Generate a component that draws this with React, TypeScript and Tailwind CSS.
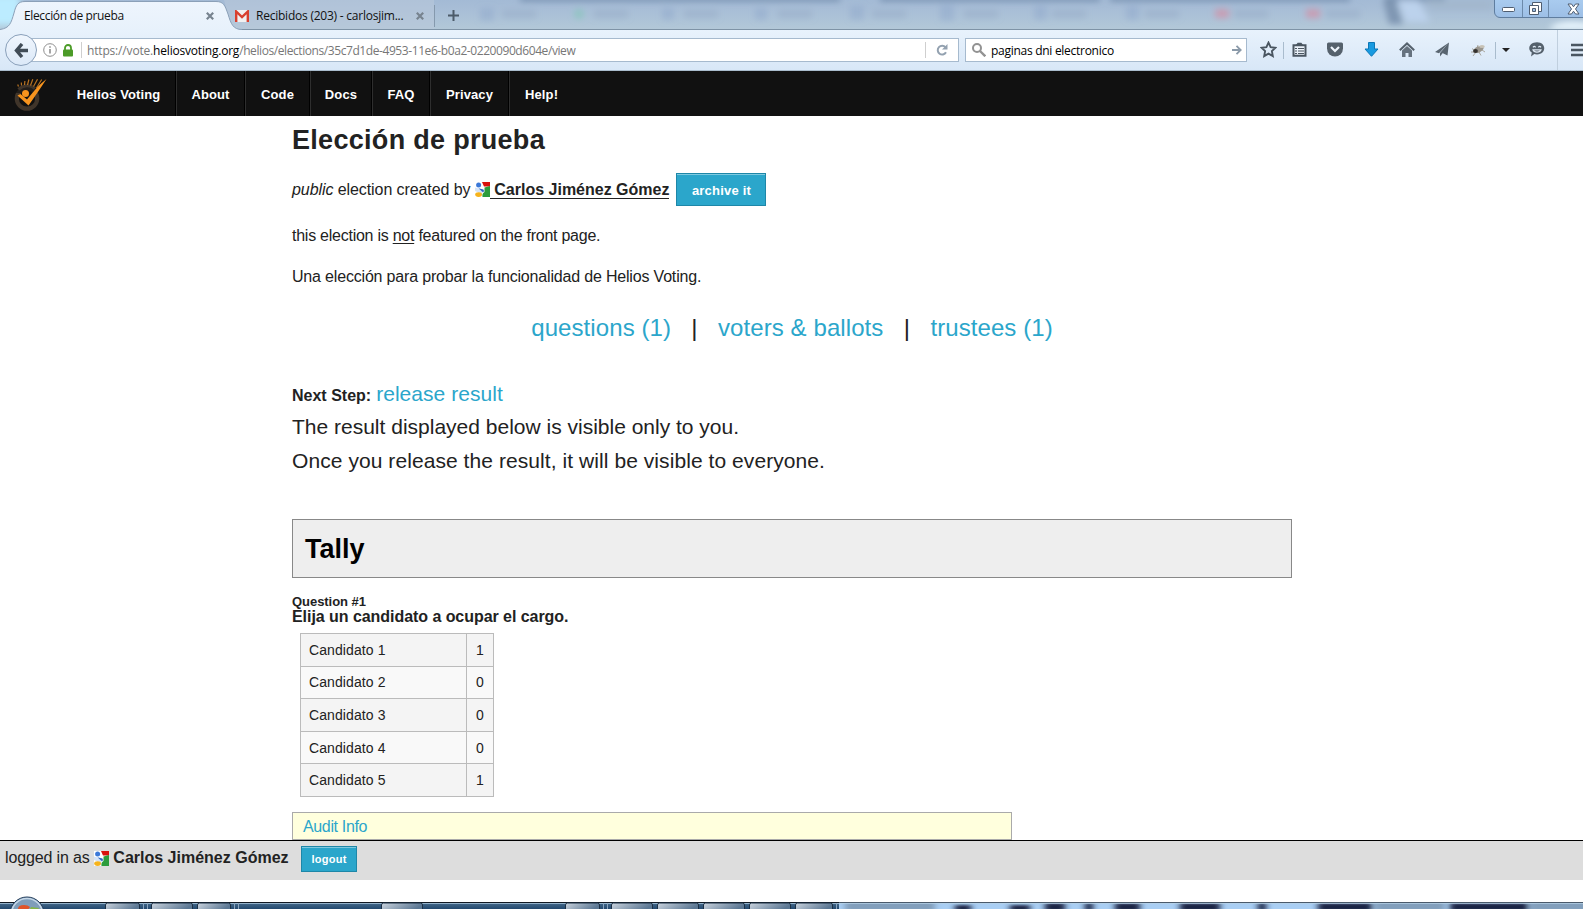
import React from "react";

const ui = "font-['Open_Sans','Noto_Sans',sans-serif]";

function GoogleMark() {
  return (
    <svg width="15" height="15" viewBox="0 0 15 15" className="shrink-0">
      <rect width="15" height="15" fill="#fff" />
      <path d="M7 0h8v4.5H9z" fill="#d9120c" />
      <path d="M9.5 5.5 15 4v11H7.5c-.5-3 .5-4 2-5z" fill="#2c9c3c" />
      <path d="M0 5.5 5 7l3 3-1 2-7-3z" fill="#d4e3f7" />
      <circle cx="3.6" cy="3" r="2.5" fill="#3b78d8" />
      <path d="M3.5 6.2 8.4 7.6 9.2 9.5 7.6 10z" fill="#2b66c4" />
      <ellipse cx="3.6" cy="12.6" rx="3.4" ry="2.4" fill="#f6b31c" />
    </svg>
  );
}

function HeliosLogo() {
  return (
    <svg width="34" height="34" viewBox="0 0 34 34">
      <circle cx="13" cy="20.5" r="10.2" fill="none" stroke="#40352a" strokeWidth="4.2" />
      <path d="M2 15h20L33 3 25 0 4 3z" fill="#111" opacity=".65" />
      <path d="M4.5 11.5A12 12 0 0 1 21 10.5" fill="none" stroke="#40352a" strokeWidth="3" />
      <path d="m4.500 8.500-.8-2M7.500 7.500l-.2-3M10.500 7l.4-4M13.500 7l1.400-5.500M16.500 7.500l2.300-6.300M19.500 8.500l4-7.300M22.500 10l5.200-8.500" stroke="#b87322" strokeWidth="1.200" />
      <path d="M3.500 17.500 6.500 16l6.500 5.500C19 14 25 6.500 32.500 1 27 9.500 20.500 19 14.500 27.500z" fill="#f7941e" />
      <circle cx="11.500" cy="15.500" r="3.500" fill="#f7941e" />
    </svg>
  );
}

function Cross() {
  return (
    <svg width="8" height="8" viewBox="0 0 8 8" stroke="#77838f" strokeWidth="2.200">
      <path d="m.8.800 6.400 6.400M7.200.800.800 7.200" />
    </svg>
  );
}

function TabStrip() {
  return (
    <div className="relative flex h-[30px] overflow-hidden bg-[linear-gradient(180deg,#a3bad5_0%,#a9bfd7_40%,#b3c8d8_100%)]">
      <svg className="absolute inset-0" width="1583" height="30">
        <defs>
          <filter id="soft" x="-20%" y="-50%" width="140%" height="200%"><feGaussianBlur stdDeviation="3" /></filter>
          <linearGradient id="tab" x1="0" y1="0" x2="0" y2="1">
            <stop offset="0" stopColor="#eef5fd" /><stop offset="1" stopColor="#e7f1fb" />
          </linearGradient>
        </defs>
        <g filter="url(#soft)">
          <rect x="-20" y="-5" width="40" height="30" fill="#bcecff" />
          <path d="M520 -1h320M880 -1h220M1110 -1h240M1385 -1h60" stroke="#6e88a8" strokeWidth="4" />
          <g fill="#7f98c4" opacity=".3">
            <rect x="480" y="8" width="14" height="13" /><rect x="662" y="8" width="12" height="12" />
            <rect x="755" y="8" width="12" height="12" /><rect x="850" y="6" width="14" height="14" />
            <rect x="940" y="5" width="14" height="16" /><rect x="1034" y="6" width="13" height="14" />
            <rect x="1126" y="6" width="13" height="14" />
          </g>
          <g fill="#8fa6c0" opacity=".4">
            <rect x="502" y="10" width="34" height="8" /><rect x="594" y="10" width="34" height="8" />
            <rect x="684" y="10" width="34" height="8" /><rect x="778" y="10" width="34" height="8" />
            <rect x="872" y="10" width="34" height="8" /><rect x="964" y="10" width="34" height="8" />
            <rect x="1052" y="10" width="34" height="8" /><rect x="1145" y="10" width="34" height="8" />
            <rect x="1234" y="10" width="34" height="8" /><rect x="1326" y="10" width="34" height="8" />
          </g>
          <circle cx="579" cy="14" r="5" fill="#7fc8b4" opacity=".6" />
          <rect x="1215" y="9" width="14" height="9" fill="#cf95ab" opacity=".8" />
          <rect x="1306" y="9" width="14" height="9" fill="#cf95ab" opacity=".8" />
          <path d="M1383 0h12l8 24h-14z" fill="#7f96b2" />
          <path d="M1398 0h20l12 22h-24z" fill="#bcd2ec" />
          <path d="M1424 0h68v10h-60z" fill="#a3b8ce" />
          <path d="M1550 30c0-12 50-10 50 0z" fill="#eaf7ff" />
        </g>
        <path d="M224 0h210v29H232z" fill="#b9c8da" opacity=".6" />
        <path d="M0 29.500h1583" stroke="#7e93a6" />
        <path d="M0 29.500C10 28 11 23 14 13 16 5 18 1.500 25 1.500H216C224 1.500 225 6 228 14 231 24 233 29.500 242 29.500V31H0z" fill="url(#tab)" />
        <path d="M0 29.500C10 28 11 23 14 13 16 5 18 1.500 25 1.500H216C224 1.500 225 6 228 14 231 24 233 29.500 242 29.500" fill="none" stroke="#8ba0b8" />
      </svg>
      <div className={`relative flex h-[31px] w-full items-center text-[12px] text-[#111] ${ui}`}>
        <div className="flex w-[202px] pl-6 tracking-[-0.36px]">Elección de prueba</div>
        <div className="w-[33px] pl-1"><Cross /></div>
        <svg width="14" height="12" viewBox="0 0 14 12">
          <path d="M0 0h14v12H0z" fill="#f1f1f1" />
          <path d="M1.200 12V1.500L7 7l5.800-5.500V12" fill="none" stroke="#d8402f" strokeWidth="2.400" />
        </svg>
        <div className="w-[159px] pl-[7px] tracking-[-0.23px] whitespace-nowrap">Recibidos (203) - carlosjim...</div>
        <div className="w-[18px] pl-[8px]"><Cross /></div>
        <div className="ml-[8px] h-[22px] w-px bg-[#8599ad]" />
        <svg width="11" height="11" viewBox="0 0 11 11" className="ml-[13px]" stroke="#4c5b69" strokeWidth="2">
          <path d="M5.500 0v11M0 5.500h11" />
        </svg>
        <div className="-mt-[14px] mr-[-8px] ml-auto flex h-[19px] w-[97px] items-center rounded-bl-md border border-[#5f7d9f] bg-[linear-gradient(180deg,#a9cbef,#9dbfe6)] text-center">
          <span className="flex h-full w-[28px] items-center justify-center border-r border-[#6c8aab] pt-[2px]">
            <svg width="13" height="7"><rect x=".5" y="1.500" width="12" height="4" rx="1" fill="#fff" stroke="#4f5d70" /></svg>
          </span>
          <span className="flex h-full w-[27px] items-center justify-center border-r border-[#6c8aab] pr-px">
            <svg width="13" height="13" viewBox="0 0 13 13" fill="#fff" stroke="#4f5d70">
              <path d="M3.500.5h9v9h-9z" /><path d="M.5 3.500h9v9h-9z" /><path d="M3.500 6.500h3v3h-3z" fill="#9dbfe6" />
            </svg>
          </span>
          <span className="flex h-full w-[41px] items-center justify-center pl-[7px]">
            <svg width="13" height="12" viewBox="0 0 13 12"><path d="M1 1h3.500l2 2.800L8.500 1H12L8.500 6l3.500 5H8.500L6.500 8.200 4.500 11H1l3.500-5z" fill="#fff" stroke="#4f5d70" /></svg>
          </span>
        </div>
      </div>
    </div>
  );
}

function Tool({ className, children }: { className: string; children: React.ReactNode }) {
  return <div className={`flex h-full shrink-0 items-center justify-center pb-px ${className}`}>{children}</div>;
}

function Toolbar() {
  return (
    <div className={`flex h-[41px] items-center overflow-hidden border-b border-[#a9bccd] bg-[linear-gradient(180deg,#e8f2fc,#d8e7f7)] text-[12px] ${ui}`}>
      <div className="z-10 ml-[5px] flex h-[32px] w-[32px] shrink-0 items-center justify-center rounded-full border border-[#8aa0ba] bg-[linear-gradient(180deg,#f0f6fd,#dce9f8)]">
        <svg width="15" height="15" viewBox="0 0 15 15" fill="none" stroke="#414c57" strokeWidth="3.400"><path d="M8 1 2.500 7.500 8 14M2.500 7.500H14" /></svg>
      </div>
      <div className="-ml-[7px] flex h-[24px] w-[929px] shrink-0 items-center border border-[#a6bace] bg-white pl-[12px]">
        <svg width="14" height="14" viewBox="0 0 14 14" fill="none" stroke="#8f8f8f"><circle cx="7" cy="7" r="6.300" /><path d="M7 6v4.500M7 3.200v1.500" strokeWidth="1.600" /></svg>
        <svg width="10" height="13" viewBox="0 0 10 13" className="ml-[6px]"><path d="M2 7V4a3 3 0 0 1 6 0v3" fill="none" stroke="#4b9b27" strokeWidth="1.800" /><rect y="5.500" width="10" height="7" rx="1" fill="#4b9b27" /></svg>
        <div className="ml-2 h-[16px] w-px bg-[#cfcfcf]" />
        <div className="mt-[2px] ml-[5px] whitespace-nowrap text-[#777] tracking-[-0.42px]">
          <span className="tracking-[-0.17px]">https://vote.</span>
          <span className="text-black tracking-[-0.2px]">heliosvoting.org</span>/helios/elections/35c7d1de-4953-11e6-b0a2-0220090d604e/view
        </div>
        <div className="ml-auto h-[16px] w-px bg-[#cfcfcf]" />
        <div className="flex w-[32px] justify-center">
          <svg width="12" height="12" viewBox="0 0 12 12"><path d="M9.500 3.300A4.400 4.400 0 1 0 10 8.300" fill="none" stroke="#93a1b0" strokeWidth="2" /><path d="M11.500 0v5.500H6z" fill="#93a1b0" /></svg>
        </div>
      </div>
      <div className="ml-[6px] flex h-[24px] w-[282px] shrink-0 items-center border border-[#a6bace] bg-white pl-[6px]">
        <svg width="14" height="14" viewBox="0 0 14 14" fill="none" stroke="#929292" strokeWidth="2"><circle cx="5" cy="5" r="4" /><path d="m8 8 5.300 5.300" strokeWidth="2.400" /></svg>
        <div className="mt-[2px] ml-[5px] tracking-[-0.28px]">paginas dni electronico</div>
        <svg width="10" height="10" viewBox="0 0 10 10" className="mr-1 ml-auto" fill="none" stroke="#8b9aa9" strokeWidth="1.800"><path d="M0 5h8M4.500.8 8.700 5 4.500 9.200" /></svg>
      </div>
      <Tool className="w-[42px]">
        <svg width="17" height="17" viewBox="0 0 17 17" fill="none" stroke="#4a5661" strokeWidth="1.900"><path d="m8.500 1.600 2.100 4.500 4.900.6-3.600 3.400.9 5-4.300-2.500-4.300 2.500.9-5L1.500 6.700l4.900-.6z" /></svg>
      </Tool>
      <div className="ml-[-6px] h-[17px] w-px shrink-0 bg-[#a9bccd]" />
      <Tool className="ml-[-1px] w-[32px]">
        <svg width="15" height="15" viewBox="0 0 15 15"><path d="M1.500 3.200h12v10.600h-12z" fill="#eaf1f9" stroke="#4a5661" strokeWidth="2" /><path d="M4.500 3.500 6 1.500h3l1.500 2" fill="#4a5661" stroke="#4a5661" strokeWidth="1.400" /><path d="M3 6.500h2m1 0h6M3 9h2m1 0h6M3 11.500h2m1 0h6" stroke="#4a5661" strokeWidth="1.100" /></svg>
      </Tool>
      <Tool className="w-[40px]">
        <svg width="16" height="15" viewBox="0 0 16 15"><path d="M1.500.500h13q1.500 0 1.500 1.500v4.500A8 8 0 0 1 0 6.500V2Q0 .500 1.500.500z" fill="#55616c" /><path d="m4 5 4 4 4-4" fill="none" stroke="#eef5fc" strokeWidth="2.200" /></svg>
      </Tool>
      <Tool className="w-[32px]">
        <svg width="15" height="15" viewBox="0 0 15 15"><path d="M4.500.500h6V7H14l-6.500 7.300L1 7h3.500z" fill="#189ae0" stroke="#0b76b6" /></svg>
      </Tool>
      <Tool className="w-[40px]">
        <svg width="16" height="15" viewBox="0 0 16 15"><path d="M.8 8.300 8 1.500l7.200 6.800" fill="none" stroke="#55616c" strokeWidth="2" /><path d="M3 8.500 8 4l5 4.500V15H9.500v-4h-3v4H3z" fill="#66727e" /></svg>
      </Tool>
      <Tool className="w-[30px]">
        <svg width="15" height="15" viewBox="0 0 15 15"><path d="M14 .5 0 10l4 1.200zM14 .5 5 11v3.500l2.200-2.700zM14 .5 7.500 11l5 2.500z" fill="#596570" /></svg>
      </Tool>
      <Tool className="w-[43px]">
        <svg width="17" height="14" viewBox="0 0 17 14"><path d="M2 5.500 5 8M3 13l3-4m3 0 2 3.500M8 2 7 5m5 2 3 2M1 9h3" stroke="#aaa79f" /><ellipse cx="8.500" cy="6.500" rx="5.500" ry="3" fill="#9a968e" transform="rotate(-25 8.500 6.500)" /><ellipse cx="5.500" cy="8" rx="2.400" ry="2" fill="#34322f" /><ellipse cx="12" cy="3.500" rx="2.800" ry="1.600" fill="#c7c2b6" /></svg>
      </Tool>
      <div className="ml-[-5px] h-[17px] w-px shrink-0 bg-[#a9bccd]" />
      <Tool className="w-[20px]">
        <svg width="8" height="4"><path d="M0 0h8L4 4z" fill="#222" /></svg>
      </Tool>
      <Tool className="w-[41px]">
        <svg width="16" height="15" viewBox="0 0 16 15"><path d="M8 .3c9.500 0 9.800 11.700 0 12.200-1 0-2-.1-2.700-.4L2 14.500l.8-3.900C-2.200 7 .5.300 8 .3z" fill="#55616c" /><path d="M4 5.300q1.300-1.800 2.600 0M9.400 5.300q1.300-1.800 2.600 0M4 7.800h8c-1 3-7 3-8 0z" fill="none" stroke="#dfeaf5" strokeWidth="1.200" /></svg>
      </Tool>
      <div className="h-full w-px shrink-0 bg-[#c0cfde]" />
      <svg width="14" height="14" viewBox="0 0 14 14" className="ml-[13px] shrink-0" stroke="#4a5661" strokeWidth="2.400"><path d="M0 2h14M0 7h14M0 12h14" /></svg>
    </div>
  );
}

const cell = "flex items-center justify-center border-l border-l-[#2e2e2e] border-r border-r-black pt-[2px]";

function Nav() {
  return (
    <nav className="flex h-[45px] bg-[#111] text-[13px] font-bold tracking-[0.12px] text-white">
      <div className="flex w-[61px] items-start pt-[7px] pl-[14px]"><HeliosLogo /></div>
      <div className="flex w-[115px] items-center justify-center border-r border-black pt-[2px] pl-px">Helios Voting</div>
      <div className={`${cell} w-[69px]`}>About</div>
      <div className={`${cell} w-[65px]`}>Code</div>
      <div className={`${cell} w-[62px]`}>Docs</div>
      <div className={`${cell} w-[58px]`}>FAQ</div>
      <div className={`${cell} w-[79px]`}>Privacy</div>
      <div className="flex items-center border-l border-[#2e2e2e] pt-[2px] pl-[15px]">Help!</div>
    </nav>
  );
}

const votes = [1, 0, 0, 0, 1];
const btn = "flex items-center justify-center border border-[#1e87a8] bg-[#2ba6cb] font-bold text-white shadow-[inset_0_1px_0_#7fcae0]";

function Election() {
  return (
    <main className="ml-[292px] flex h-[724px] w-[1000px] flex-col text-[16px] text-[#222]">
      <h2 className="flex h-[46px] items-center pt-[2px] text-[27px] font-bold tracking-[0.3px]">Elección de prueba</h2>
      <div className="flex h-[55px] items-center">
        <div className="flex items-center whitespace-pre">
          <span className="tracking-[-0.08px]"><em>public</em> election created by </span>
          <GoogleMark />
          <b className="mt-[2px] border-b border-[#222] leading-[16px]"> Carlos Jiménez Gómez</b>
        </div>
        <button className={`${btn} ml-[7px] h-[33px] w-[90px] pt-[2px] text-[13px] tracking-[0.2px]`}>archive it</button>
      </div>
      <p className="flex h-[37px] items-center whitespace-pre tracking-[-0.25px]">this election is <u className="underline-offset-2">not</u> featured on the front page.</p>
      <p className="flex h-[44px] items-center pt-[2px] tracking-[-0.18px]">Una elección para probar la funcionalidad de Helios Voting.</p>
      <div className="flex h-[59px] items-center justify-center pt-px text-[24px] tracking-[0.08px]">
        <a className="text-[#2ba6cb]">questions (1)</a>
        <span className="w-[47px] text-center">|</span>
        <a className="text-[#2ba6cb]">voters &amp; ballots</a>
        <span className="w-[47px] text-center">|</span>
        <a className="text-[#2ba6cb]">trustees (1)</a>
      </div>
      <div className="mt-[21px] flex h-[32px] items-baseline text-[21px] leading-[32px] tracking-[0.05px]">
        <b className="mr-[5px] text-[16px] tracking-normal">Next Step:</b>
        <a className="text-[#2ba6cb]">release result</a>
      </div>
      <p className="flex h-[34px] items-center text-[21px]">The result displayed below is visible only to you.</p>
      <p className="flex h-[33px] items-center text-[21px] tracking-[0.07px]">Once you release the result, it will be visible to everyone.</p>
      <h3 className="mt-[42px] flex h-[59px] shrink-0 items-center border border-[#888] bg-[#eee] pt-[2px] pl-[12px] text-[27px] font-bold text-black">Tally</h3>
      <div className="mt-[15px] flex h-[16px] items-center pt-[2px] text-[13px] font-bold tracking-[-0.05px]">Question #1</div>
      <div className="flex h-[15px] items-center text-[16px] font-bold tracking-[-0.05px]">Elija un candidato a ocupar el cargo.</div>
      <div className="mt-[9px] ml-2 flex h-[164px] w-[194px] flex-col border-t border-l border-[#bbb] text-[14px] tracking-[0.09px]">
        {votes.map((v, i) => (
          <div key={i} className="flex flex-1 border-b border-[#bbb] pt-px odd:bg-[#f4f4f4] even:bg-[#f9f9f9]">
            <div className="-mt-px flex w-[166px] items-center border-r border-[#bbb] pt-px pl-2">Candidato {i + 1}</div>
            <div className="-mt-px flex w-[27px] items-center justify-center border-r border-[#bbb] pt-px">{v}</div>
          </div>
        ))}
      </div>
      <div className="mt-[15px] flex h-[28px] w-[720px] items-center border border-[#aaa] bg-[#ffffdd] pt-[2px] pl-[10px] text-[16px] tracking-[-0.35px] text-[#2ba6cb]">Audit Info</div>
    </main>
  );
}

const tasks = [
  [105, 35], [151, 42], [197, 34], [381, 42], [565, 35], [611, 42], [657, 42], [703, 42], [749, 42], [795, 38],
];

function Taskbar() {
  return (
    <svg width="1583" height="16" viewBox="0 0 1583 16" className="-mt-[9px] block">
      <defs>
        <linearGradient id="bar" x1="0" y1="0" x2="0" y2="1"><stop offset="0" stopColor="#4a7090" /><stop offset="1" stopColor="#23486e" /></linearGradient>
        <linearGradient id="btn" x1="0" y1="0" x2="1" y2=".3"><stop offset="0" stopColor="#ccd5df" /><stop offset="1" stopColor="#5b7793" /></linearGradient>
        <filter id="haze"><feGaussianBlur stdDeviation="3 1.500" /></filter>
        <clipPath id="strip"><path d="M839 10h744v6H839z" /></clipPath>
      </defs>
      <path d="M0 9h1583v7H0z" fill="url(#bar)" />
      <g clipPath="url(#strip)">
        <path d="M839 9h744v7H839z" fill="#a9cef3" />
        <g filter="url(#haze)">
          <path d="M845 9h90v9h-90zM1375 9h70v9h-70zM1530 9h60v9h-60z" fill="#829fbc" />
          <path d="M955 12h16v6h-16zM1010 12h20v6h-20zM1045 10h20v8h-20zM1085 10h8v8h-8zM1115 10h25v8h-25zM1180 10h40v8h-40zM1258 10h8v8h-8zM1318 10h54v8h-54zM1450 10h78v8h-78z" fill="#1d2747" />
        </g>
      </g>
      <path d="M0 9.500h839" stroke="#111922" /><path d="M839 9.500h744" stroke="#4a5a6b" />
      <path d="M0 10.500h1583" stroke="#b6d2e5" strokeOpacity=".7" />
      {tasks.map(([x, w]) => (
        <path key={x} d={`M${x + 0.5} 17V12q0-2 2-2h${w - 5}q2 0 2 2v5z`} fill="url(#btn)" stroke="#1c3045" />
      ))}
      <path d="M143.500 10v6M147.500 10v6M234.500 10v6M238.500 10v6M603.500 10v6M607.500 10v6M836.500 10v6" stroke="#8aa5bf" />
      <circle cx="27" cy="21" r="17" fill="#7f9dba" stroke="#203a57" />
      <circle cx="27" cy="21" r="15.500" fill="none" stroke="#c6d8e8" strokeWidth="1.500" />
      <path d="M18 16q0-4 6-4 4 0 6 2l-3 4z" fill="#e0542a" />
      <path d="m31 14 8 1-2 3h-8z" fill="#86b548" />
    </svg>
  );
}

export default function App() {
  return (
    <div className="h-[909px] w-[1583px] overflow-hidden bg-white font-['Liberation_Sans',Arial,sans-serif]">
      <TabStrip />
      <Toolbar />
      <Nav />
      <Election />
      <footer className="flex h-[40px] items-center border-t border-black bg-[#ddd] pl-[5px] text-[16px] whitespace-pre text-[#222]">
        <div className="flex items-center pb-[6px]">
          <span className="tracking-[-0.14px]">logged in as </span>
          <span className="pt-[2px]"><GoogleMark /></span>
          <b> Carlos Jiménez Gómez</b>
        </div>
        <button className={`${btn} -mt-[3px] ml-[12.500px] h-[26px] w-[56px] text-[11px] tracking-[0.25px]`}>logout</button>
      </footer>
      <div className="h-[22px]" />
      <Taskbar />
    </div>
  );
}
